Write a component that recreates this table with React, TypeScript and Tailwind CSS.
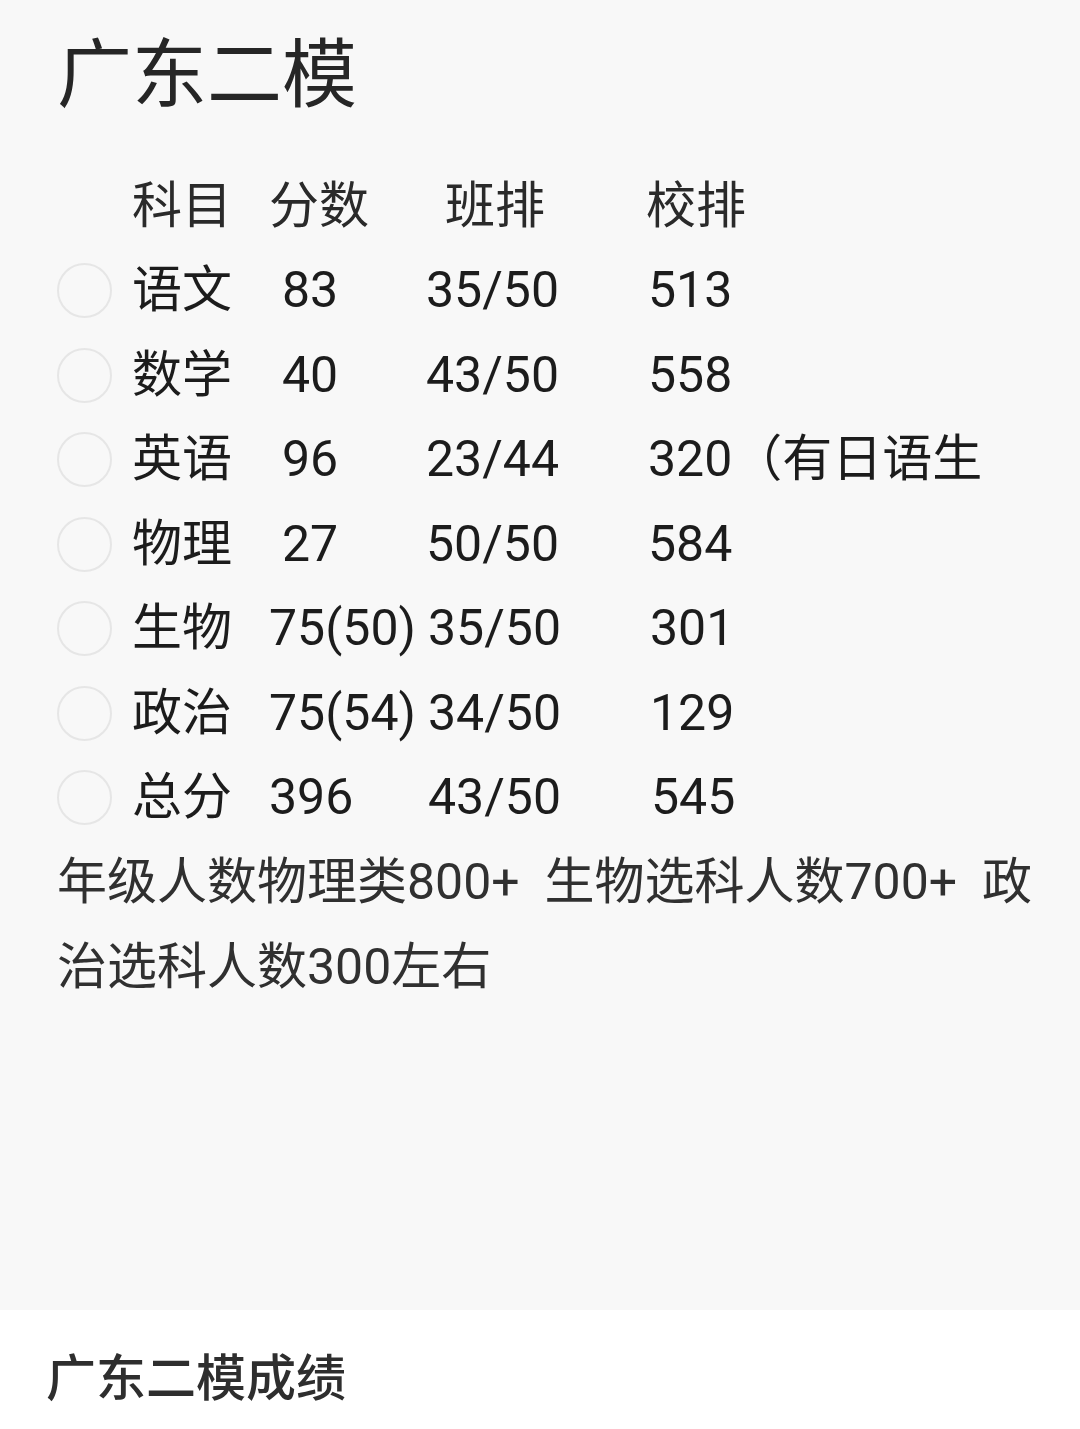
const rows = [
  { name: "语文", score: "83", scoreX: 283, cls: "35/50", clsX: 427, school: "513", schoolX: 649 },
  { name: "数学", score: "40", scoreX: 283, cls: "43/50", clsX: 427, school: "558", schoolX: 649 },
  { name: "英语", score: "96", scoreX: 283, cls: "23/44", clsX: 427, school: "320（有日语生", schoolX: 648 },
  { name: "物理", score: "27", scoreX: 283, cls: "50/50", clsX: 427, school: "584", schoolX: 649 },
  { name: "生物", score: "75(50)", scoreX: 270, cls: "35/50", clsX: 429, school: "301", schoolX: 651 },
  { name: "政治", score: "75(54)", scoreX: 270, cls: "34/50", clsX: 429, school: "129", schoolX: 651 },
  { name: "总分", score: "396", scoreX: 270, cls: "43/50", clsX: 429, school: "545", schoolX: 652 },
];

const font = { fontFamily: 'Roboto, "Noto Sans CJK SC", sans-serif' };

function Row({ r }: { r: (typeof rows)[number] }) {
  return (
    <div className="flex h-[84.5px] items-center">
      <span className="ml-[57px] h-[55px] w-[55px] shrink-0 rounded-full border-2 border-[#e6e6e6]" />
      <div className="flex w-full items-center">
        <span className="ml-[20px] w-[137px] shrink-0">{r.name}</span>
        <span className="w-[157px] shrink-0" style={{ paddingLeft: r.scoreX - 270 }}>{r.score}</span>
        <span className="w-[222px] shrink-0" style={{ paddingLeft: r.clsX - 427 }}>{r.cls}</span>
        <span className="shrink-0 whitespace-pre" style={{ paddingLeft: r.schoolX - 649 }}>{r.school}</span>
      </div>
    </div>
  );
}

export default function App() {
  return (
    <div className="flex h-[1429px] w-[1080px] flex-col bg-white text-[#1c1c1c]" style={font}>
      <div className="flex h-[1310px] flex-col bg-[#f8f8f8]">
        <h1 className="ml-[57px] mt-[38px] text-[75px] leading-[75px] font-normal text-[#262626]">广东二模</h1>
        <div className="mt-[51px] flex h-[84.5px] items-center text-[50px] text-[#2a2a2a]">
          <span className="ml-[132px] w-[137px]">科目</span>
          <span className="w-[176px]">分数</span>
          <span className="w-[201px]">班排</span>
          <span>校排</span>
        </div>
        <div className="flex flex-col text-[50px]">
          {rows.map((r) => (
            <Row key={r.name} r={r} />
          ))}
        </div>
        <p className="ml-[57px] mr-[30px] text-[50px] leading-[85px] text-[#303030]">
          年级人数物理类800+&nbsp; 生物选科人数700+&nbsp; 政治选科人数300左右
        </p>
      </div>
      <div className="flex flex-1 items-center bg-white pt-[18px]">
        <h2 className="ml-[46px] text-[50px] font-medium leading-none text-[#2e2e2e]">广东二模成绩</h2>
      </div>
    </div>
  );
}
